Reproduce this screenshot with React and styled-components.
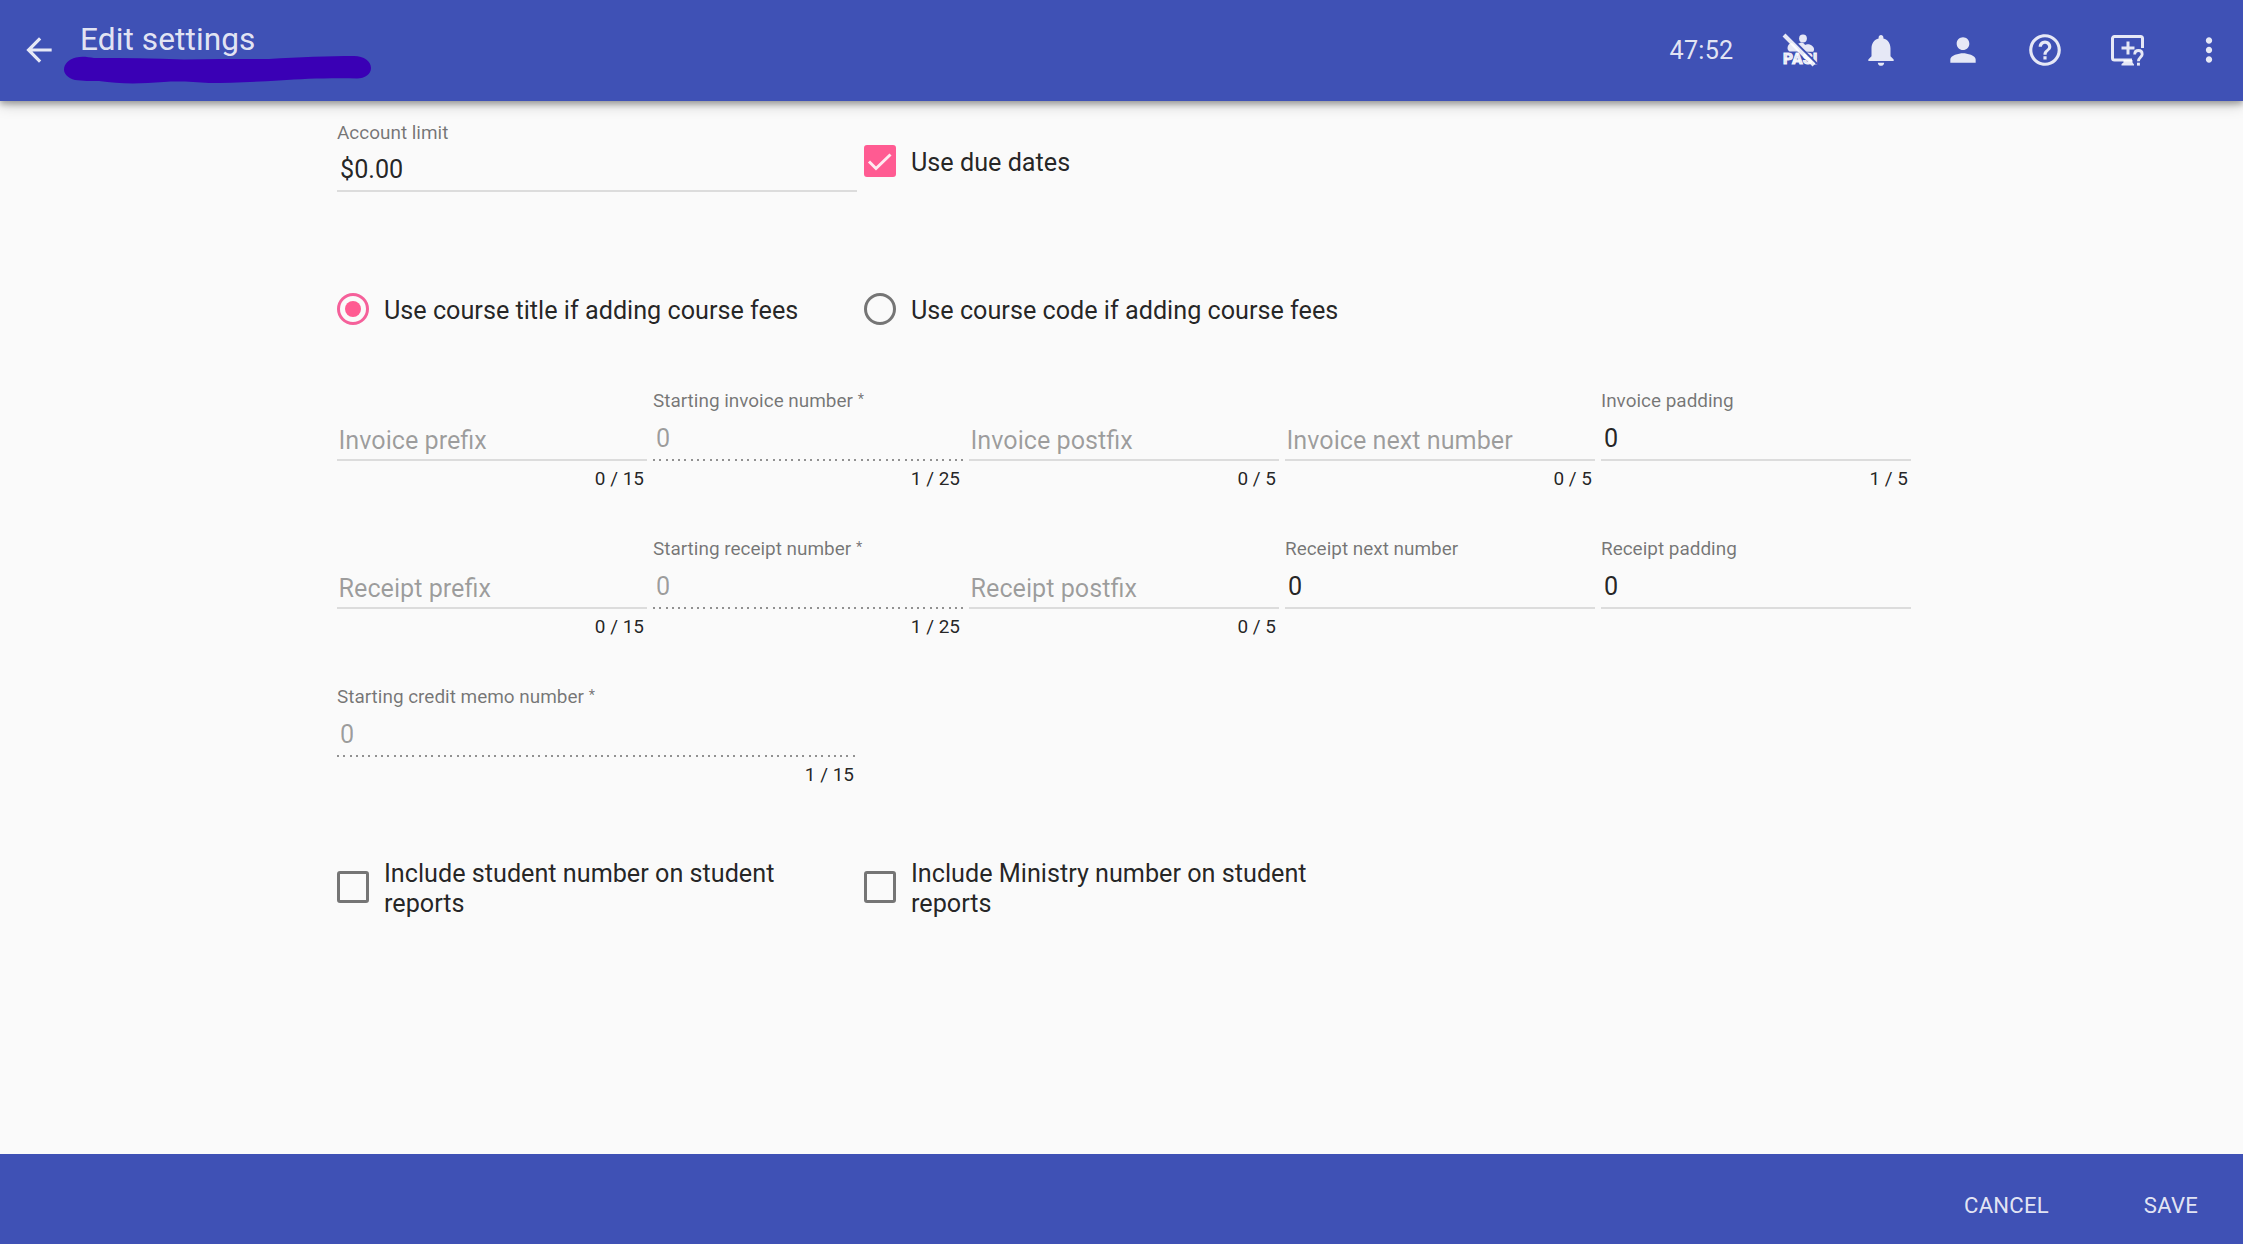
import React from "react";
import styled, { createGlobalStyle, css } from "styled-components";

const GlobalStyle = createGlobalStyle`
  *, *::before, *::after { box-sizing: border-box; }
  body {
    margin: 0;
    background: #fafafa;
    color: rgba(0, 0, 0, 0.87);
    font-family: Roboto, "Liberation Sans", sans-serif;
    font-size: 25.2px;
  }
`;

const Page = styled.div`
  display: flex;
  flex-direction: column;
  height: 1244px;
`;

const Toolbar = styled.header`
  position: relative;
  z-index: 1;
  display: flex;
  align-items: center;
  flex: none;
  height: 101px;
  padding: 0 15px 1px 20px;
  background: #3f51b5;
  color: rgba(255, 255, 255, 0.87);
  box-shadow: 0 3px 6px rgba(0, 0, 0, 0.28), 0 3px 14px rgba(0, 0, 0, 0.22);
`;

const IconButton = styled.button`
  display: flex;
  align-items: center;
  justify-content: center;
  width: 38px;
  height: 38px;
  padding: 0;
  border: 0;
  background: none;
  color: inherit;

  svg {
    width: 38px;
    height: 38px;
    fill: currentColor;
    overflow: visible;
  }
`;

const TitleBlock = styled.div`
  position: relative;
  flex: 1;
  align-self: stretch;
  padding: 21px 0 0 22px;
`;

const Title = styled.h1`
  margin: 0;
  font-size: 31.6px;
  line-height: 38px;
  font-weight: 400;
  letter-spacing: 0.003em;
`;

const Scribble = styled.svg`
  position: absolute;
  left: 6px;
  top: 56px;
  width: 308px;
  height: 30px;
  fill: #3a00b5;
`;

const Timer = styled.span`
  margin: 2px 46.5px 0 0;
  line-height: 32px;
  letter-spacing: 0.01em;
`;

const Actions = styled.nav`
  display: flex;
  gap: 44px;
`;

const Form = styled.main`
  flex: 1;
  width: 1911px;
  padding: 19px 0 0 337px;
`;

const Row = styled.div`
  display: grid;
  grid-template-columns: repeat(${(p) => p.$columns}, 1fr);
  column-gap: ${(p) => (p.$columns === 5 ? 6 : 7)}px;
  align-items: ${(p) => (p.$center ? "center" : "start")};
  height: ${(p) => p.$height}px;
  margin-bottom: ${(p) => p.$after || 0}px;
`;

const FieldBox = styled.div`
  display: flex;
  flex-direction: column;
`;

const Label = styled.label`
  height: 24px;
  padding-top: ${(p) => (p.$low ? 1 : 0)}px;
  font-size: 18.96px;
  line-height: 24px;
  white-space: pre;
  color: rgba(0, 0, 0, 0.54);
`;

const Asterisk = styled.span`
  margin-left: 1.2px;
  font-size: 14.5px;
  line-height: 1;
  vertical-align: 3px;
`;

const Value = styled.div`
  height: 46px;
  padding: ${(p) => (p.$placeholder ? "11.5px 0 0 1.5px" : "9.5px 0 0 3px")};
  line-height: 32px;
  white-space: nowrap;
  color: rgba(0, 0, 0, ${(p) => (p.$muted ? 0.38 : 0.87)});
`;

const Underline = styled.div`
  height: 2px;
  background: #dcdcdc;
  ${(p) =>
    p.$dotted &&
    css`
      background: repeating-linear-gradient(
        to right,
        rgba(0, 0, 0, 0.42) 0 2px,
        transparent 2px 6.29px
      );
    `}
`;

const Counter = styled.div`
  margin-top: 5.5px;
  padding-right: 3px;
  font-size: 18.96px;
  line-height: 24px;
  text-align: right;
`;

const Choice = styled.label`
  display: flex;
  align-items: center;
  gap: 15px;
  margin-top: ${(p) => p.$offset || 0}px;
  line-height: 30px;
`;

const ChoiceText = styled.span`
  flex: 1;
  margin-bottom: -3px;
  padding-right: 40px;
`;

const Box = styled.span`
  display: flex;
  align-items: center;
  justify-content: center;
  flex: none;
  width: 32px;
  height: 32px;
  border: 3px solid ${(p) => (p.$checked ? "#ff5b92" : "#757575")};
  border-radius: 3px;
  background: ${(p) => (p.$checked ? "#ff5b92" : "transparent")};

  svg {
    flex: none;
    width: 32px;
    height: 32px;
    fill: none;
    stroke: rgba(255, 255, 255, 0.87);
    stroke-width: 3;
  }
`;

const Dial = styled(Box)`
  border-color: ${(p) => (p.$checked ? "#f5609a" : "#757575")};
  border-radius: 50%;
  background: none;

  &::after {
    content: "";
    width: 16px;
    height: 16px;
    border-radius: 50%;
    background: ${(p) => (p.$checked ? "#ff5b92" : "transparent")};
  }
`;

const Footer = styled.footer`
  display: flex;
  justify-content: flex-end;
  align-items: center;
  flex: none;
  gap: 95px;
  height: 90px;
  padding: 11px 45px 0 0;
  background: #3f51b5;
`;

const FooterButton = styled.button`
  padding: 0;
  border: 0;
  background: none;
  color: rgba(255, 255, 255, 0.87);
  font: 400 22.12px/30px Roboto, "Liberation Sans", sans-serif;
  letter-spacing: 0.01em;
  text-transform: uppercase;
`;

const Field = ({ label, value, placeholder, counter, disabled, required, low }) => (
  <FieldBox>
    <Label $low={low}>
      {label}
      {required && <Asterisk> *</Asterisk>}
    </Label>
    <Value $placeholder={!!placeholder} $muted={!!placeholder || disabled}>
      {placeholder || value}
    </Value>
    <Underline $dotted={disabled} />
    {counter && <Counter>{counter}</Counter>}
  </FieldBox>
);

const Checkbox = ({ checked, offset, children }) => (
  <Choice $offset={offset}>
    <Box $checked={checked}>
      {checked && (
        <svg viewBox="0 0 32 32">
          <path d="M5 16.5l7 7L26.5 9.5" />
        </svg>
      )}
    </Box>
    <ChoiceText>{children}</ChoiceText>
  </Choice>
);

const Radio = ({ checked, children }) => (
  <Choice>
    <Dial $checked={checked} />
    <ChoiceText>{children}</ChoiceText>
  </Choice>
);

const Icon = ({ d }) => (
  <svg viewBox="0 0 24 24">
    <path d={d} />
  </svg>
);

const icons = {
  back: "M20 11H7.83l5.59-5.59L12 4l-8 8 8 8 1.41-1.41L7.83 13H20v-2z",
  bell: "M12 22c1.1 0 2-.9 2-2h-4c0 1.1.9 2 2 2zm6-6v-5c0-3.07-1.63-5.64-4.5-6.32V4c0-.83-.67-1.5-1.5-1.5s-1.5.67-1.5 1.5v.68C7.64 5.36 6 7.92 6 11v5l-2 2v1h16v-1l-2-2z",
  person:
    "M12 12c2.21 0 4-1.79 4-4s-1.79-4-4-4-4 1.79-4 4 1.79 4 4 4zm0 2c-2.67 0-8 1.34-8 4v2h16v-2c0-2.66-5.33-4-8-4z",
  help: "M11 18h2v-2h-2v2zm1-16C6.48 2 2 6.48 2 12s4.48 10 10 10 10-4.48 10-10S17.52 2 12 2zm0 18c-4.41 0-8-3.59-8-8s3.59-8 8-8 8 3.59 8 8-3.59 8-8 8zm0-14c-2.21 0-4 1.79-4 4h2c0-1.1.9-2 2-2s2 .9 2 2c0 2-3 1.75-3 5h2c0-2.25 3-2.5 3-5 0-2.21-1.79-4-4-4z",
  more: "M12 8c1.1 0 2-.9 2-2s-.9-2-2-2-2 .9-2 2 .9 2 2 2zm0 2c-1.1 0-2 .9-2 2s.9 2 2 2 2-.9 2-2-.9-2-2-2zm0 6c-1.1 0-2 .9-2 2s.9 2 2 2 2-.9 2-2-.9-2-2-2z",
};

const PasiText = styled.text`
  font: 900 15.5px Roboto, sans-serif;
  letter-spacing: 0;
  stroke: currentColor;
  stroke-width: 0.9px;
`;

const PasiOffIcon = () => (
  <svg viewBox="-1 0 38 38">
    <circle cx="22" cy="7.5" r="3.9" />
    <path d="M6.500 17c0-3 2-5 4.500-5 3 2 5.500 5 8 8.500H8.500C7.200 19.500 6.500 18.500 6.500 17z" />
    <path d="M16.500 13l3.500-1.500c2 0 3.500 1 4 2.500 3-1.800 8.500 .2 9 3.800.2 1.200-.2 2.200-.8 3H25z" />
    <PasiText x="2" y="33" textLength="34.500">
      PASI
    </PasiText>
    <path d="M5.500 2.500L36 33" fill="none" stroke="#3f51b5" strokeWidth="2.400" />
    <path d="M3 4L33 34" fill="none" stroke="currentColor" strokeWidth="4" />
  </svg>
);

const ScreenHelpIcon = () => (
  <svg viewBox="-1 0 38 38">
    <path
      d="M23 29H5.500a2 2 0 0 1-2-2V7.500a2 2 0 0 1 2-2h26a2 2 0 0 1 2 2V17"
      fill="none"
      stroke="currentColor"
      strokeWidth="3"
    />
    <path d="M17.500 10.500h3v5h5v3h-5v5h-3v-5h-5v-3h5z" />
    <path d="M14.500 29h9v2.500l1.500 2V34.500H12.500V33l2-1.500z" />
    <path
      d="M25.700 23.500c0-2.500 1.500-4 3.700-4s3.800 1.500 3.800 3.700c0 2.800-3.800 3.300-3.800 7"
      fill="none"
      stroke="currentColor"
      strokeWidth="2.800"
    />
    <path d="M28 31.700h2.900v2.900H28z" />
  </svg>
);

export default function App() {
  return (
    <>
      <GlobalStyle />
      <Page>
        <Toolbar>
          <IconButton aria-label="Back">
            <Icon d={icons.back} />
          </IconButton>
          <TitleBlock>
            <Title>Edit settings</Title>
            <Scribble viewBox="0 0 308 30">
              <path d="M12 1.500C18 0 24 1 30 2C60 2 90 2 120 3.500C150 3 180 3 205 3C235 1 265 0 290 0C300 0 307 5 307 12C307 18 301 22.500 293 22.500C260 22 240 23 215 24.500C190 26 165 27 145 27C130 26 115 25 100 26C75 28 55 28 35 25C27 25 18 25 11 24C4 22 0 18 0 13.500C0 8 5 3 12 1.500Z" />
            </Scribble>
          </TitleBlock>
          <Timer>47:52</Timer>
          <Actions>
            <IconButton aria-label="PASI disabled">
              <PasiOffIcon />
            </IconButton>
            <IconButton aria-label="Notifications">
              <Icon d={icons.bell} />
            </IconButton>
            <IconButton aria-label="Account">
              <Icon d={icons.person} />
            </IconButton>
            <IconButton aria-label="Help">
              <Icon d={icons.help} />
            </IconButton>
            <IconButton aria-label="Remote support">
              <ScreenHelpIcon />
            </IconButton>
            <IconButton aria-label="More">
              <Icon d={icons.more} />
            </IconButton>
          </Actions>
        </Toolbar>

        <Form>
          <Row $columns={3} $height={173}>
            <Field label="Account limit" value="$0.00" low />
            <Checkbox checked offset={25}>
              Use due dates
            </Checkbox>
          </Row>

          <Row $columns={3} $height={32} $after={64} $center>
            <Radio checked>Use course title if adding course fees</Radio>
            <Radio>Use course code if adding course fees</Radio>
          </Row>

          <Row $columns={5} $height={148}>
            <Field placeholder="Invoice prefix" counter="0 / 15" />
            <Field label="Starting invoice number" value="0" counter="1 / 25" disabled required />
            <Field placeholder="Invoice postfix" counter="0 / 5" />
            <Field placeholder="Invoice next number" counter="0 / 5" />
            <Field label="Invoice padding" value="0" counter="1 / 5" />
          </Row>

          <Row $columns={5} $height={148}>
            <Field placeholder="Receipt prefix" counter="0 / 15" />
            <Field label="Starting receipt number" value="0" counter="1 / 25" disabled required />
            <Field placeholder="Receipt postfix" counter="0 / 5" />
            <Field label="Receipt next number" value="0" />
            <Field label="Receipt padding" value="0" />
          </Row>

          <Row $columns={3} $height={148} $after={24}>
            <Field label="Starting credit memo number" value="0" counter="1 / 15" disabled required />
          </Row>

          <Row $columns={3} $height={60} $center>
            <Checkbox>Include student number on student reports</Checkbox>
            <Checkbox>Include Ministry number on student reports</Checkbox>
          </Row>
        </Form>

        <Footer>
          <FooterButton>Cancel</FooterButton>
          <FooterButton>Save</FooterButton>
        </Footer>
      </Page>
    </>
  );
}
